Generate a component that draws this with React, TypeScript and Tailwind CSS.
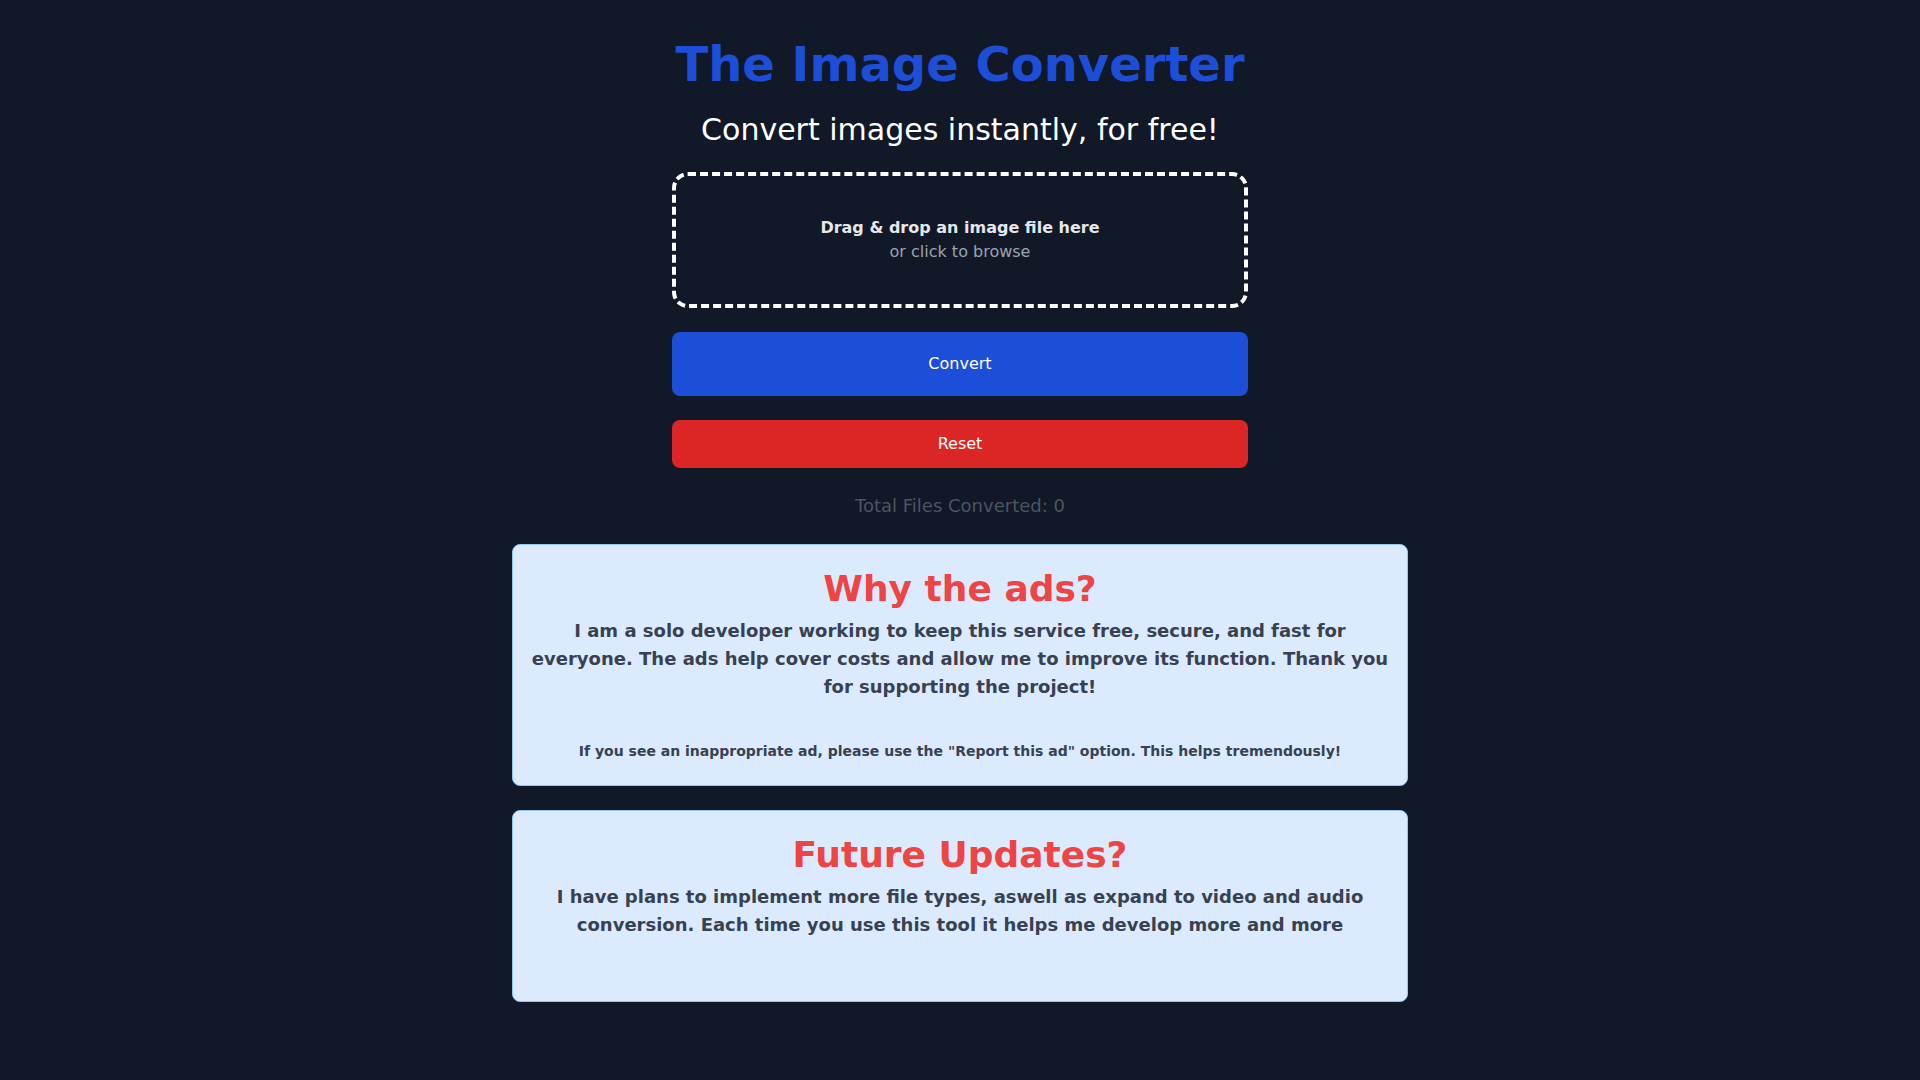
import { useState } from "react";

const FONT = { fontFamily: '"DejaVu Sans", Verdana, sans-serif' };

export default function App() {
  const [count, setCount] = useState(0);

  return (
    <div className="min-h-screen bg-[#111827] px-4 pt-10 pb-10" style={FONT}>
      <div className="mx-auto flex max-w-4xl flex-col items-center text-center">
        <h1 className="mb-6 text-5xl leading-none font-bold text-[#1d4ed8]">The Image Converter</h1>
        <p className="mb-6 text-3xl text-white">Convert images instantly, for free!</p>

        <div className="w-full max-w-xl cursor-pointer rounded-2xl border-4 border-dashed border-white py-10">
          <p className="text-base font-bold text-[#e5e7eb]">Drag &amp; drop an image file here</p>
          <p className="text-base text-[#9ca3af]">or click to browse</p>
        </div>

        <button
          onClick={() => setCount((c) => c)}
          className="mt-6 w-full max-w-xl rounded-lg bg-[#1d4ed8] py-5 text-base text-white"
        >
          Convert
        </button>
        <button
          onClick={() => setCount(0)}
          className="mt-6 w-full max-w-xl rounded-lg bg-[#dc2626] py-3 text-base text-white"
        >
          Reset
        </button>

        <p className="mt-6 text-lg text-[#4b5563]">Total Files Converted: {count}</p>

        <div className="mt-6 w-full rounded-lg border border-[#93c5fd] bg-[#dbeafe] px-4 py-6">
          <h2 className="mb-2 text-4xl font-bold text-[#ef4444]">Why the ads?</h2>
          <p className="text-lg font-bold text-[#374151]">
            I am a solo developer working to keep this service free, secure, and fast for everyone. The ads help
            cover costs and allow me to improve its function. Thank you for supporting the project!
          </p>
          <p className="mt-10 text-sm font-bold text-[#374151]">
            If you see an inappropriate ad, please use the "Report this ad" option. This helps tremendously!
          </p>
        </div>

        <div className="mt-6 w-full rounded-lg border border-[#93c5fd] bg-[#dbeafe] px-4 pt-6 pb-[62px]">
          <h2 className="mb-2 text-4xl font-bold text-[#ef4444]">Future Updates?</h2>
          <p className="text-lg font-bold text-[#374151]">
            I have plans to implement more file types, aswell as expand to video and audio conversion. Each time you
            use this tool it helps me develop more and more
          </p>
        </div>
      </div>
    </div>
  );
}
